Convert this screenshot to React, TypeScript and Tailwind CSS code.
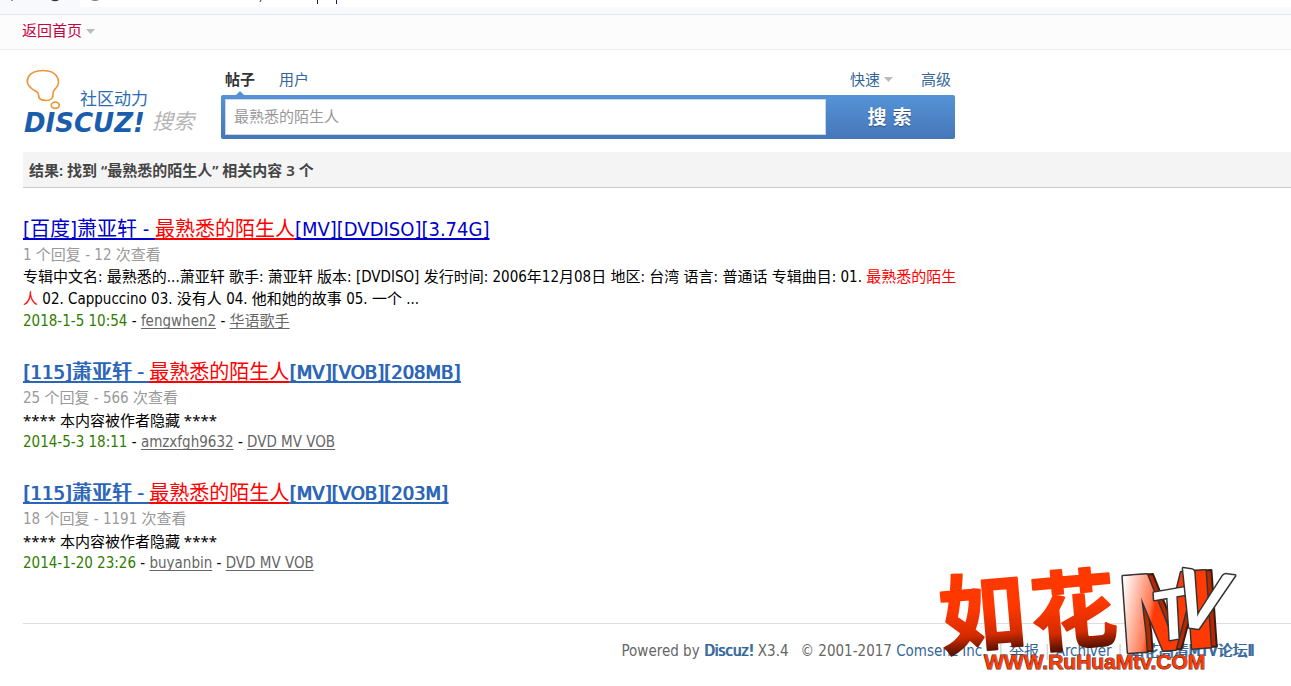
import type { ReactNode } from "react";

const KEYWORD = "最熟悉的陌生人";

function Caret() {
  return (
    <svg width="9" height="5" viewBox="0 0 9 5" aria-hidden="true" className="shrink-0">
      <path d="M0 0h9L4.500 5z" fill="#bbb" />
    </svg>
  );
}

function BrowserEdge() {
  return (
    <div className="h-[15px] border-b border-[#e6e8eb] bg-[#f8f9fc] pl-20">
      <div className="relative h-[7px] bg-white">
        <svg width="400" height="4" viewBox="0 0 400 4" aria-hidden="true" className="absolute top-0 -left-20">
          <path d="M11 0h2v1h-2z" fill="#999" />
          <path d="M51 0Q55 2.400 59 0" fill="#333" />
          <path d="M91 0Q95 2 99 0" fill="#777" />
          <path d="M261 0l-1 2" stroke="#336" />
          <path d="M317.500 0v4M336.500 0v4" stroke="#1a1a6e" />
        </svg>
      </div>
    </div>
  );
}

function Logo() {
  return (
    <a href="#home" aria-label="Discuz! 搜索" className="mt-0.5 block w-[174px] shrink-0">
      <svg width="174" height="70" viewBox="0 0 174 70" className="block">
        <path
          d="M14.500 24.500C13 22.500 10 22 8 20C1 14 4 2.500 20 2.500C36 2.500 38 15 33 20C31 22 29.500 23 30 26C30.500 30 28 32.500 23 32.500C17 32.500 15.500 29.500 15.500 27Q15.500 25.500 14.500 24.500Z"
          fill="none"
          stroke="#ea963a"
          strokeWidth="1.700"
        />
        <ellipse cx="32.300" cy="37.300" rx="4" ry="3.100" fill="none" stroke="#ea963a" strokeWidth="1.700" />
        <text x="57" y="37" fill="#2a6cb4" className="font-['Noto_Sans_CJK_SC',sans-serif] text-[17px]">
          社区动力
        </text>
        <text x="1" y="64" fill="#1b5dad" className="font-['DejaVu_Sans',sans-serif] text-[26px] font-bold italic">
          DISCUZ!
        </text>
        <text x="129" y="61" fill="#b5b5b5" className="font-['Noto_Sans_CJK_SC',sans-serif] text-[21px] italic">
          搜索
        </text>
      </svg>
    </a>
  );
}

function SearchForm() {
  return (
    <form className="flex w-[734px] flex-col" onSubmit={(e) => e.preventDefault()}>
      <nav className="flex h-[29px] items-center px-1 pb-0.5 text-[#369]">
        <a href="#threads" className="relative font-bold text-[#333]">
          帖子
          <svg width="10" height="5" viewBox="0 0 10 5" aria-hidden="true" className="absolute -bottom-[5px] left-[10px]">
            <path d="M5 0l5 5H0z" fill="#5590d5" />
          </svg>
        </a>
        <a href="#users" className="ml-6">
          用户
        </a>
        <a href="#quick" className="ml-auto flex items-center gap-1">
          快速 <Caret />
        </a>
        <a href="#advanced" className="ml-7">
          高级
        </a>
      </nav>
      <div className="flex h-11 rounded-xs bg-linear-to-b from-[#5593d7] to-[#4577b8] py-1 pl-1">
        <input
          type="text"
          aria-label="搜索"
          defaultValue={KEYWORD}
          className="min-w-0 flex-1 border border-[#c9d6e8] bg-white px-2 text-[#999] outline-none"
        />
        <button
          type="submit"
          className="w-[129px] shrink-0 pr-0.5 text-[19px] leading-none font-bold text-white text-shadow-[0_1px_1px_#2b4f80]"
        >
          搜 索
        </button>
      </div>
    </form>
  );
}

function Mark({ children = KEYWORD }: { children?: ReactNode }) {
  return <em className="text-[#ff0000] not-italic">{children}</em>;
}

function HiddenPost() {
  return <span className="block font-['Noto_Sans','Noto_Sans_CJK_SC',sans-serif]">**** 本内容被作者隐藏 ****</span>;
}

type Thread = {
  prefix: string;
  suffix: string;
  stats: string;
  body: ReactNode;
  date: string;
  author: string;
  forum: string;
  unread: boolean;
};

const threads: Thread[] = [
  {
    prefix: "[百度]萧亚轩 - ",
    suffix: "[MV][DVDISO][3.74G]",
    stats: "1 个回复 - 12 次查看",
    body: (
      <>
        专辑中文名: 最熟悉的...萧亚轩 歌手: 萧亚轩 版本: [DVDISO] 发行时间: 2006年12月08日 地区: 台湾 语言: 普通话
        专辑曲目: 01. <Mark /> 02. Cappuccino 03. 没有人 04. 他和她的故事 05. 一个 ...
      </>
    ),
    date: "2018-1-5 10:54",
    author: "fengwhen2",
    forum: "华语歌手",
    unread: false,
  },
  {
    prefix: "[115]萧亚轩 - ",
    suffix: "[MV][VOB][208MB]",
    stats: "25 个回复 - 566 次查看",
    body: <HiddenPost />,
    date: "2014-5-3 18:11",
    author: "amzxfgh9632",
    forum: "DVD MV VOB",
    unread: true,
  },
  {
    prefix: "[115]萧亚轩 - ",
    suffix: "[MV][VOB][203M]",
    stats: "18 个回复 - 1191 次查看",
    body: <HiddenPost />,
    date: "2014-1-20 23:26",
    author: "buyanbin",
    forum: "DVD MV VOB",
    unread: true,
  },
];

function Result({ thread }: { thread: Thread }) {
  return (
    <li className="max-w-[945px]">
      <h3 className="text-[20px] leading-[29px] [text-decoration-skip-ink:none]">
        <a
          href="#thread"
          className={
            thread.unread
              ? "text-[#2b65b7] underline decoration-2 underline-offset-2 text-shadow-[1px_0_0_#2b65b7]"
              : "text-[#0000cc] underline decoration-2 underline-offset-2"
          }
        >
          {thread.prefix}
          <em className="text-[#ff0000] not-italic underline decoration-2 underline-offset-2 text-shadow-none">
            {KEYWORD}
          </em>
          {thread.suffix}
        </a>
      </h3>
      <p className="text-[#999]">{thread.stats}</p>
      <p>{thread.body}</p>
      <p className="[text-decoration-skip-ink:none]">
        <span className="text-[#2f7d00]">{thread.date}</span> -{" "}
        <a href="#author" className="text-[#666] underline underline-offset-2">
          {thread.author}
        </a>{" "}
        -{" "}
        <a href="#forum" className="text-[#666] underline underline-offset-2">
          {thread.forum}
        </a>
      </p>
    </li>
  );
}

function Watermark() {
  return (
    <svg
      width="310"
      height="120"
      viewBox="0 0 310 120"
      role="img"
      aria-label="如花 MTV"
      className="pointer-events-none absolute right-[43px] bottom-[6px]"
    >
      <defs>
        <linearGradient id="brush" x1="0" y1="0" x2="0" y2="1">
          <stop offset="0.500" stopColor="#ff3800" />
          <stop offset="0.720" stopColor="#d52b00" />
          <stop offset="0.850" stopColor="#5a1200" />
        </linearGradient>
        <linearGradient id="block" x1="0" y1="0.250" x2="1" y2="0.600">
          <stop offset="0.050" stopColor="#ffffff" />
          <stop offset="0.350" stopColor="#ff7a54" />
          <stop offset="0.400" stopColor="#ff3a04" />
        </linearGradient>
      </defs>
      <g
        fill="url(#brush)"
        stroke="url(#brush)"
        strokeWidth="2"
        strokeLinejoin="round"
        transform="rotate(-5 90 60)"
        className="font-['Noto_Sans_CJK_SC',sans-serif] text-[86px] font-bold"
      >
        <text x="2" y="81">
          如
        </text>
        <text x="93" y="86">
          花
        </text>
      </g>
      <g strokeLinejoin="round" transform="rotate(-4 230 60)" className="font-[Roboto,sans-serif] text-[108px] font-black">
        <text x="188" y="90" fill="#b82800" stroke="#3a1a10" strokeWidth="2">
          M
        </text>
        <text x="182" y="90" fill="url(#block)" stroke="#333" strokeWidth="3" paintOrder="stroke">
          M
        </text>
      </g>
      <g
        fill="#fff"
        stroke="#333"
        strokeWidth="3"
        strokeLinejoin="round"
        paintOrder="stroke"
        textAnchor="middle"
        className="font-[Lato,sans-serif] font-bold italic"
      >
        <text x="234" y="79" transform="rotate(-10 234 52)" className="text-[68px]">
          T
        </text>
        <text x="263" y="69" transform="rotate(8 263 40)" className="text-[80px]">
          V
        </text>
      </g>
      <text
        x="46"
        y="109"
        fill="#ff3a04"
        stroke="#333"
        strokeWidth="1"
        paintOrder="stroke"
        className="font-['Liberation_Sans',sans-serif] text-[21px] font-bold"
      >
        WWW.RuHuaMtv.COM
      </text>
    </svg>
  );
}

export default function App() {
  return (
    <div className="relative bg-white pb-6 font-['DejaVu_Sans_Condensed','Noto_Sans_CJK_SC',sans-serif] text-[15px] leading-[22px] text-black">
      <BrowserEdge />
      <div className="flex h-[35px] items-center border-b border-[#ececec] bg-[#fcfcfc] px-[22px] pb-0.5">
        <a href="#index" className="flex items-center gap-1 text-[#c7003f]">
          返回首页 <Caret />
        </a>
      </div>

      <header className="flex h-[102px] items-start gap-6 pt-4 pl-[23px]">
        <Logo />
        <SearchForm />
      </header>

      <main className="pl-[23px]">
        <h2 className="flex h-9 items-center border-b border-[#ccc] bg-[#f4f4f4] px-1.5 font-['Noto_Sans','Noto_Sans_CJK_SC',sans-serif] font-semibold text-[#444]">
          结果: 找到 “{KEYWORD}” 相关内容 3 个
        </h2>
        <ul className="flex flex-col gap-[26px] py-[27px]">
          {threads.map((t) => (
            <Result key={t.suffix} thread={t} />
          ))}
        </ul>
      </main>

      <div className="pl-[23px]">
        <footer className="mt-[22px] flex justify-end gap-3 border-t border-[#ddd] pt-4 pr-[37px] text-[#666]">
          <p>
            Powered by{" "}
            <a href="#discuz" className="text-[#369] text-shadow-[1px_0_0_#369]">
              Discuz!
            </a>{" "}
            X3.4
          </p>
          <p>
            © 2001-2017{" "}
            <a href="#comsenz" className="text-[#369]">
              Comsenz Inc.
            </a>
          </p>
          <nav className="flex gap-1.5">
            <span className="text-[#ccc]">|</span>
            <a href="#report" className="text-[#369]">
              举报
            </a>
            <span className="text-[#ccc]">|</span>
            <a href="#archiver" className="text-[#369]">
              Archiver
            </a>
            <span className="text-[#ccc]">|</span>
            <a href="#site" className="text-[#369] text-shadow-[1px_0_0_#369]">
              如花高清MTV论坛Ⅱ
            </a>
          </nav>
        </footer>
      </div>

      <Watermark />
    </div>
  );
}
